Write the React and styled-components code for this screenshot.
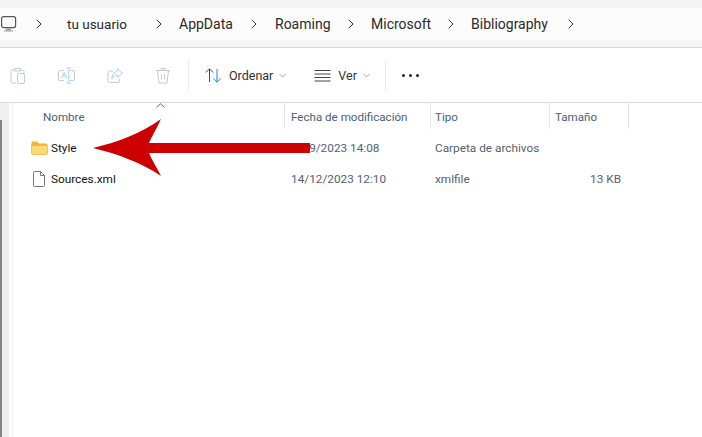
import React from 'react';
import styled, { createGlobalStyle } from 'styled-components';

const GlobalStyle = createGlobalStyle`
	html, body {
		margin: 0;
		padding: 0;
		background: #ffffff;
		overflow: hidden;
	}
`;

const Page = styled.div`
	position: relative;
	width: 702px;
	height: 437px;
	display: flex;
	flex-direction: column;
	background: #ffffff;
	font-family: Roboto, "Noto Sans", sans-serif;
	color: #1c1c1c;
`;

const AddressArea = styled.div`
	height: 32px;
	padding: 8px 0 7px 0;
	background: #f4f4f4;
	border-bottom: 1px solid #d6d6d6;
`;

const AddressBar = styled.nav`
	height: 32px;
	display: flex;
	align-items: center;
	background: #fcfcfc;
	color: #2a2a2a;
`;

const MonitorIcon = styled.svg`
	width: 16px;
	height: 16px;
	margin-left: 1px;
	flex: none;
`;

const Crumb = styled.span`
	width: ${(p) => p.$width}px;
	white-space: nowrap;
	font-size: ${(p) => p.$size || 14}px;
`;

const Chevron = styled.svg`
	width: 6px;
	height: 10px;
	margin: 0 ${(p) => p.$after}px 0 ${(p) => p.$before}px;
	flex: none;
`;

const Toolbar = styled.div`
	height: 54px;
	display: flex;
	align-items: center;
	background: #ffffff;
	border-bottom: 1px solid #d9d9d9;
`;

const ToolIcon = styled.svg`
	width: 17px;
	height: 17px;
	flex: none;
	margin-left: ${(p) => p.$left}px;
`;

const ToolDivider = styled.div`
	width: 1px;
	height: 31px;
	background: #ebebeb;
	margin-left: ${(p) => p.$left}px;
	flex: none;
`;

const ToolLabel = styled.span`
	font-size: 12.5px;
	color: #333333;
	margin-left: 7px;
	white-space: nowrap;
`;

const Caret = styled.svg`
	width: 7px;
	height: 5px;
	margin-left: 6px;
	flex: none;
`;

const Dots = styled.div`
	display: flex;
	gap: 4px;
	margin-left: 16px;

	span {
		width: 3px;
		height: 3px;
		background: #222222;
		border-radius: 50%;
	}
`;

const Body = styled.div`
	flex: 1;
	display: flex;
	min-height: 0;
`;

const Sidebar = styled.div`
	width: 9px;
	flex: none;
	background: #efefef;
	border-right: 1px solid #ffffff;
	padding-top: 17px;
	margin-right: 2px;
	box-shadow: 2px 0 0 #ffffff, 3px 0 0 #f1f1f1;
`;

const SidebarEdge = styled.div`
	width: 2px;
	height: 100%;
	background: #858585;
`;

const List = styled.div`
	flex: 1;
	padding-left: 1px;
	min-width: 0;
`;

const HeaderRow = styled.div`
	position: relative;
	height: 26px;
	display: grid;
	grid-template-columns: 272px 146px 119px 79px;
`;

const HeaderCell = styled.div`
	display: flex;
	align-items: center;
	height: 26px;
	box-sizing: border-box;
	padding: 1px 0 0 ${(p) => p.$pad}px;
	border-right: 1px solid #e5e5e5;
	font-size: 11.6px;
	color: #4c607a;
`;

const SortCaret = styled.svg`
	position: absolute;
	left: 143px;
	top: 0;
	width: 9px;
	height: 5px;
`;

const Row = styled.div`
	height: 31px;
	display: grid;
	grid-template-columns: 272px 146px 119px 79px;
	align-items: center;
	font-size: 11.8px;
	color: #56606e;
	margin-top: ${(p) => p.$top || 0}px;
`;

const NameCell = styled.div`
	display: flex;
	align-items: center;
	color: #111111;
	padding-left: ${(p) => p.$pad}px;
	gap: ${(p) => p.$gap}px;
`;

const PlainCell = styled.div`
	padding-left: ${(p) => p.$pad}px;
	white-space: nowrap;
`;

const SizeCell = styled.div`
	text-align: right;
	padding-right: 8px;
`;

const ArrowOverlay = styled.svg`
	position: absolute;
	left: 90px;
	top: 116px;
	width: 224px;
	height: 64px;
`;

const crumbChevron = (before, after) => (
	<Chevron $before={before} $after={after} viewBox="0 0 6 10">
		<path d="M0.8 0.8 L5 5 L0.8 9.2" fill="none" stroke="#333" strokeWidth="1" />
	</Chevron>
);

const smallCaret = (
	<Caret viewBox="0 0 7 5">
		<path d="M0.5 1 L3.5 4 L6.5 1" fill="none" stroke="#a5a5a5" strokeWidth="1" />
	</Caret>
);

function App() {
	return (
		<Page>
			<GlobalStyle />
			<AddressArea>
				<AddressBar>
					<MonitorIcon viewBox="0 0 16 16">
						<rect x="0.6" y="0.6" width="14" height="11" rx="2" fill="none" stroke="#555" strokeWidth="1.2" />
						<path d="M5 12.5 H10 V14.5 H5 Z" fill="#999" />
						<path d="M3 15 H12" stroke="#999" strokeWidth="1" />
					</MonitorIcon>
					{crumbChevron(19, 25)}
					<Crumb $width={60} $size={13.5}>tu usuario</Crumb>
					{crumbChevron(29, 17)}
					<Crumb $width={54}>AppData</Crumb>
					{crumbChevron(18, 18)}
					<Crumb $width={55}>Roaming</Crumb>
					{crumbChevron(18, 17)}
					<Crumb $width={60}>Microsoft</Crumb>
					{crumbChevron(17, 17)}
					<Crumb $width={79}>Bibliography</Crumb>
					{crumbChevron(18, 0)}
				</AddressBar>
			</AddressArea>
			<Toolbar>
				<ToolIcon $left={10} viewBox="0 0 17 17">
					<path d="M4 3 H2.5 A1.5 1.5 0 0 0 1 4.5 V14.5 A1.5 1.5 0 0 0 2.5 16 H6 M11 3 H12.5 A1.5 1.5 0 0 1 14 4.5 V6 M4.5 1.5 H10.5 V4 H4.5 Z" fill="none" stroke="#c9c9c9" />
					<rect x="7.5" y="6.5" width="7" height="10" rx="1.5" fill="none" stroke="#a6d3f7" />
				</ToolIcon>
				<ToolIcon $left={31} viewBox="0 0 17 17">
					<path d="M6 3.5 H2 A1.5 1.5 0 0 0 0.5 5 V12 A1.5 1.5 0 0 0 2 13.5 H6 M12 3.5 H15 A1.5 1.5 0 0 1 16.5 5 V12 A1.5 1.5 0 0 1 15 13.5 H12" fill="none" stroke="#c9c9c9" />
					<path d="M3.5 11 L6.2 5.5 L8.8 11 M4.5 9 H8" fill="none" stroke="#a6d3f7" />
					<path d="M8.5 1 H13 M8.5 16 H13 M10.8 1 V16" fill="none" stroke="#a6d3f7" />
				</ToolIcon>
				<ToolIcon $left={32} viewBox="0 0 17 17">
					<path d="M6 4 H2.5 A1.5 1.5 0 0 0 1 5.5 V14 A1.5 1.5 0 0 0 2.5 15.5 H11 A1.5 1.5 0 0 0 12.5 14 V12" fill="none" stroke="#c9c9c9" />
					<path d="M10.5 1.5 L15.5 6 L10.5 10.5 V8 C8 8 6 9.5 4.8 12 C5 8 7 4.5 10.5 4 Z" fill="none" stroke="#a6d3f7" />
				</ToolIcon>
				<ToolIcon $left={31} viewBox="0 0 17 17">
					<path d="M1 3.5 H15 M6 3.5 V1.5 H10 V3.5 M2.5 3.5 L4 16 H12 L13.5 3.5 M6.5 7 V12.5 M9.5 7 V12.5" fill="none" stroke="#c9c9c9" />
				</ToolIcon>
				<ToolDivider $left={16} />
				<ToolIcon $left={16} viewBox="0 0 17 17">
					<path d="M4.5 15 V2 M0.8 5.5 L4.5 1.8 L8.2 5.5" fill="none" stroke="#444" />
					<path d="M12 2 V15 M8.3 11.5 L12 15.2 L15.7 11.5" fill="none" stroke="#1a86d8" />
				</ToolIcon>
				<ToolLabel>Ordenar</ToolLabel>
				{smallCaret}
				<ToolIcon $left={28} viewBox="0 0 17 17">
					<path d="M0.5 3.5 H16.5 M0.5 7 H16.5 M0.5 10.5 H16.5 M0.5 14 H16.5" fill="none" stroke="#444" />
				</ToolIcon>
				<ToolLabel>Ver</ToolLabel>
				{smallCaret}
				<ToolDivider $left={15} />
				<Dots>
					<span />
					<span />
					<span />
				</Dots>
			</Toolbar>
			<Body>
				<Sidebar>
					<SidebarEdge />
				</Sidebar>
				<List>
					<HeaderRow>
						<HeaderCell $pad={30}>Nombre</HeaderCell>
						<HeaderCell $pad={6}>Fecha de modificación</HeaderCell>
						<HeaderCell $pad={4}>Tipo</HeaderCell>
						<HeaderCell $pad={5}>Tamaño</HeaderCell>
						<SortCaret viewBox="0 0 9 5">
							<path d="M0.5 4.5 L4.5 0.8 L8.5 4.5" fill="none" stroke="#666" />
						</SortCaret>
					</HeaderRow>
					<Row $top={3}>
						<NameCell $pad={18} $gap={3}>
							<svg width="17" height="14" viewBox="0 0 17 14">
								<path d="M0.5 2 A1.5 1.5 0 0 1 2 0.5 H6 L8 2.5 H15 A1.5 1.5 0 0 1 16.5 4 V5 H0.5 Z" fill="#f0b62e" />
								<path d="M0.5 4.5 H16.5 V12 A1.5 1.5 0 0 1 15 13.5 H2 A1.5 1.5 0 0 1 0.5 12 Z" fill="#fcd974" stroke="#eeb93f" strokeWidth="0.8" />
							</svg>
							Style
						</NameCell>
						<PlainCell $pad={6}>12/9/2023 14:08</PlainCell>
						<PlainCell $pad={4}>Carpeta de archivos</PlainCell>
						<SizeCell />
					</Row>
					<Row>
						<NameCell $pad={20} $gap={6}>
							<svg width="12" height="16" viewBox="0 0 12 16">
								<path d="M0.5 1.5 A1 1 0 0 1 1.5 0.5 H7.5 L11.5 4.5 V14.5 A1 1 0 0 1 10.5 15.5 H1.5 A1 1 0 0 1 0.5 14.5 Z" fill="#fdfdfd" stroke="#777" />
								<path d="M7.5 0.5 V4.5 H11.5" fill="none" stroke="#777" />
							</svg>
							Sources.xml
						</NameCell>
						<PlainCell $pad={6}>14/12/2023 12:10</PlainCell>
						<PlainCell $pad={4}>xmlfile</PlainCell>
						<SizeCell>13 KB</SizeCell>
					</Row>
				</List>
			</Body>
			<ArrowOverlay viewBox="90 116 224 64">
				<path d="M93 148 C118 142 142 133 161 119 C157 128 152 136 149 143 H310 V153 H149 C152 160 157 168 161 176 C142 163 118 154 93 148 Z" fill="#cc0000" />
			</ArrowOverlay>
		</Page>
	);
}

export default App;
